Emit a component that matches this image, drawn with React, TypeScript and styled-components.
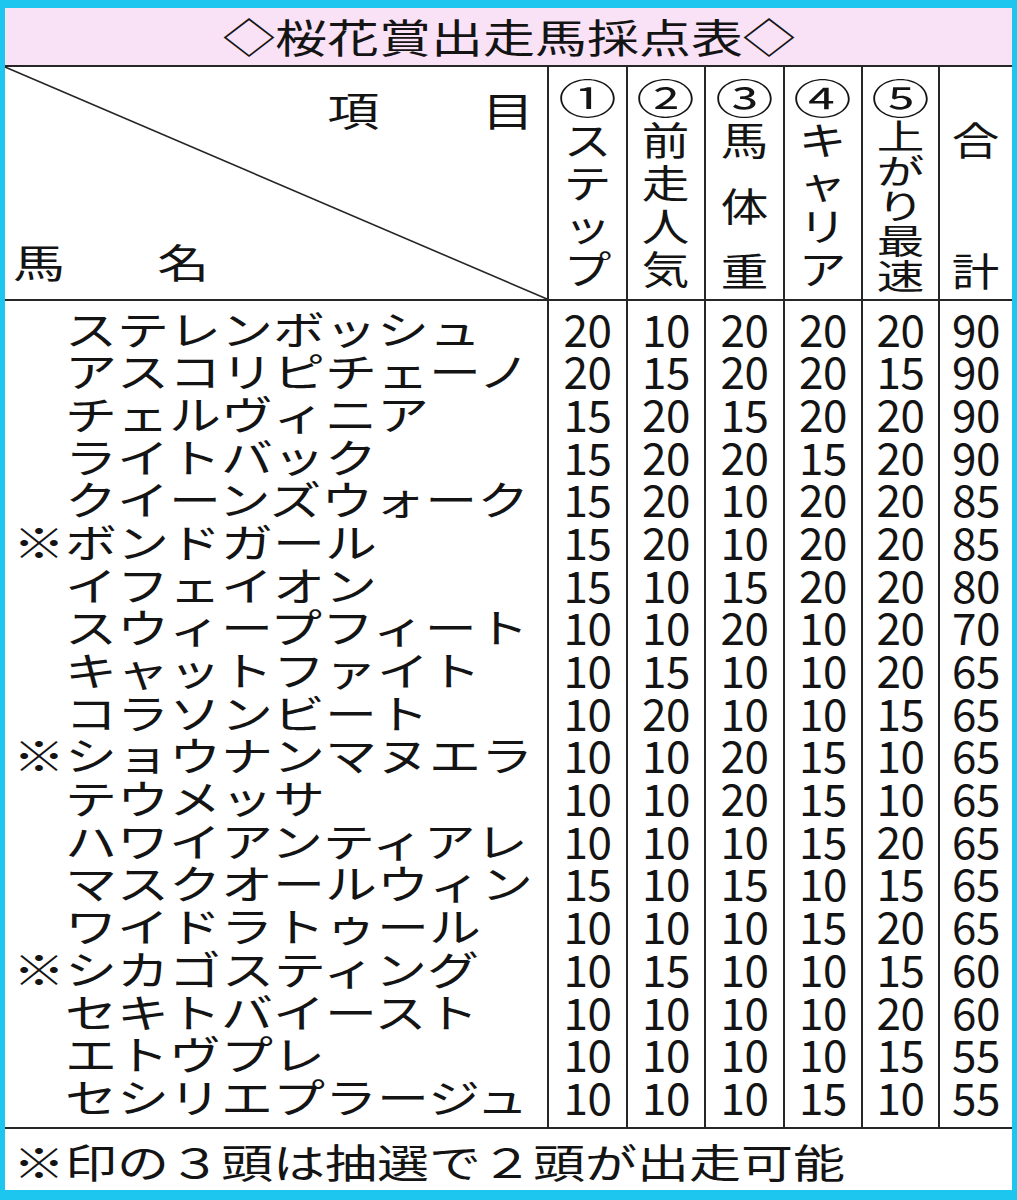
import React from "react";
import styled, { createGlobalStyle } from "styled-components";

const Global = createGlobalStyle`
  html, body { margin: 0; padding: 0; background: #1cc6ef; }
  body { font-family: "Noto Sans CJK JP", sans-serif; color: #141414; }
`;

const LINE = "#262626";
const COLS = "542px 79px 78px 79px 78px 77px 1fr";

const Frame = styled.div`
  width: 1017px;
  height: 1200px;
  box-sizing: border-box;
  padding: 8px 5px 10px 5px;
  background: #1cc6ef;
`;

const Sheet = styled.div`
  background: #ffffff;
  display: flex;
  flex-direction: column;
  height: 100%;
`;

const Title = styled.div`
  height: 57px;
  background: #f9e1f6;
  border-bottom: 2px solid ${LINE};
  display: flex;
  justify-content: center;
  align-items: center;
`;

const Wide = styled.span<{ $origin?: string; $scale?: number }>`
  display: inline-block;
  white-space: nowrap;
  transform: scaleX(${(p) => p.$scale ?? 1.3});
  transform-origin: ${(p) => p.$origin ?? "center"} center;
`;

const TitleText = styled(Wide)`
  font-size: 40px;
  line-height: 57px;
`;

const Grid = styled.div`
  display: grid;
  grid-template-columns: ${COLS};
`;

const Header = styled(Grid)`
  height: 234px;
  box-sizing: border-box;
  border-bottom: 2px solid ${LINE};
`;

const CornerCell = styled.div`
  position: relative;
  display: flex;
  flex-direction: column;
  justify-content: space-between;
  padding: 22px 13px 18px 8px;
`;

const Diagonal = styled.svg`
  position: absolute;
  inset: 0;
  width: 100%;
  height: 100%;
  overflow: visible;
`;

const CornerRow = styled.div<{ $end?: boolean }>`
  display: flex;
  justify-content: ${(p) => (p.$end ? "flex-end" : "flex-start")};
`;

const CornerLabel = styled(Wide)`
  display: flex;
  gap: ${(p) => (p.$origin === "right" ? "79px" : "71px")};
  font-size: 40px;
  line-height: 40px;
`;

const HeadCol = styled.div`
  border-left: 2px solid ${LINE};
  display: flex;
  flex-direction: column;
  align-items: center;
  padding: 9px 0 8px;
  overflow: hidden;
`;

const Stack = styled.div<{ $spread?: boolean }>`
  flex: 1;
  display: flex;
  flex-direction: column;
  align-items: center;
  justify-content: ${(p) => (p.$spread ? "space-between" : "flex-start")};
`;

const Glyph = styled.span<{ $h: number; $size?: number; $sx?: number; $sy?: number }>`
  display: block;
  height: ${(p) => p.$h}px;
  line-height: ${(p) => p.$h}px;
  font-size: ${(p) => p.$size ?? 39}px;
  transform: scale(${(p) => p.$sx ?? 1.22}, ${(p) => p.$sy ?? 1});
  text-align: center;
`;

const Body = styled(Grid)`
  height: 828px;
  box-sizing: border-box;
  border-bottom: 2px solid ${LINE};
`;

const Column = styled.div<{ $first?: boolean }>`
  border-left: ${(p) => (p.$first ? "none" : `2px solid ${LINE}`)};
  padding: 5.5px 0 0 ${(p) => (p.$first ? "8px" : "0")};
  display: flex;
  flex-direction: column;
  min-width: 0;
`;

const NameLine = styled(Wide)`
  display: block;
  font-size: 40px;
  height: 42.7px;
  line-height: 42.7px;
`;

const Mark = styled.span`
  display: inline-block;
  width: 1em;
`;

const Score = styled.div`
  height: 42.7px;
  line-height: 42.7px;
  font-size: 44px;
  text-align: center;
  letter-spacing: -0.5px;
`;

const Footer = styled.div`
  flex: 1;
  padding-left: 8px;
  display: flex;
  align-items: center;
`;

const FooterText = styled(Wide)`
  font-size: 40px;
  line-height: 57px;
  margin-top: 4px;
`;

type Horse = [string, boolean, number[]];

const horses: Horse[] = [
  ["ステレンボッシュ", false, [20, 10, 20, 20, 20, 90]],
  ["アスコリピチェーノ", false, [20, 15, 20, 20, 15, 90]],
  ["チェルヴィニア", false, [15, 20, 15, 20, 20, 90]],
  ["ライトバック", false, [15, 20, 20, 15, 20, 90]],
  ["クイーンズウォーク", false, [15, 20, 10, 20, 20, 85]],
  ["ボンドガール", true, [15, 20, 10, 20, 20, 85]],
  ["イフェイオン", false, [15, 10, 15, 20, 20, 80]],
  ["スウィープフィート", false, [10, 10, 20, 10, 20, 70]],
  ["キャットファイト", false, [10, 15, 10, 10, 20, 65]],
  ["コラソンビート", false, [10, 20, 10, 10, 15, 65]],
  ["ショウナンマヌエラ", true, [10, 10, 20, 15, 10, 65]],
  ["テウメッサ", false, [10, 10, 20, 15, 10, 65]],
  ["ハワイアンティアレ", false, [10, 10, 10, 15, 20, 65]],
  ["マスクオールウィン", false, [15, 10, 15, 10, 15, 65]],
  ["ワイドラトゥール", false, [10, 10, 10, 15, 20, 65]],
  ["シカゴスティング", true, [10, 15, 10, 10, 15, 60]],
  ["セキトバイースト", false, [10, 10, 10, 10, 20, 60]],
  ["エトヴプレ", false, [10, 10, 10, 10, 15, 55]],
  ["セシリエプラージュ", false, [10, 10, 10, 15, 10, 55]],
];

type HeadDef = { circle: string; chars: string[]; pitch: number; sy?: number; spread?: boolean };

const heads: HeadDef[] = [
  { circle: "①", chars: ["ス", "テ", "ッ", "プ"], pitch: 43 },
  { circle: "②", chars: ["前", "走", "人", "気"], pitch: 43 },
  { circle: "③", chars: ["馬", "体", "重"], pitch: 43, spread: true },
  { circle: "④", chars: ["キ", "ャ", "リ", "ア"], pitch: 43 },
  { circle: "⑤", chars: ["上", "が", "り", "最", "速"], pitch: 35, sy: 0.86 },
  { circle: "", chars: ["合", "計"], pitch: 43, spread: true },
];

export default function App() {
  return (
    <Frame>
      <Global />
      <Sheet>
        <Title>
          <TitleText>◇桜花賞出走馬採点表◇</TitleText>
        </Title>
        <Header>
          <CornerCell>
            <Diagonal>
              <line x1="0" y1="0" x2="100%" y2="100%" stroke={LINE} strokeWidth="1.6" />
            </Diagonal>
            <CornerRow $end>
              <CornerLabel $origin="right">
                <span>項</span>
                <span>目</span>
              </CornerLabel>
            </CornerRow>
            <CornerRow>
              <CornerLabel $origin="left">
                <span>馬</span>
                <span>名</span>
              </CornerLabel>
            </CornerRow>
          </CornerCell>
          {heads.map((h, i) => (
            <HeadCol key={i}>
              <Glyph $h={41} $size={45} $sx={1.3} $sy={0.9}>
                {h.circle}
              </Glyph>
              <Stack $spread={h.spread}>
                {h.chars.map((c, j) => (
                  <Glyph key={j} $h={h.pitch} $sy={h.sy}>
                    {c}
                  </Glyph>
                ))}
              </Stack>
            </HeadCol>
          ))}
        </Header>
        <Body>
          <Column $first>
            {horses.map(([name, mark]) => (
              <NameLine key={name} $origin="left">
                <Mark>{mark ? "※" : ""}</Mark>
                {name}
              </NameLine>
            ))}
          </Column>
          {[0, 1, 2, 3, 4, 5].map((c) => (
            <Column key={c}>
              {horses.map(([name, , s]) => (
                <Score key={name}>{s[c]}</Score>
              ))}
            </Column>
          ))}
        </Body>
        <Footer>
          <FooterText $origin="left">※印の３頭は抽選で２頭が出走可能</FooterText>
        </Footer>
      </Sheet>
    </Frame>
  );
}
